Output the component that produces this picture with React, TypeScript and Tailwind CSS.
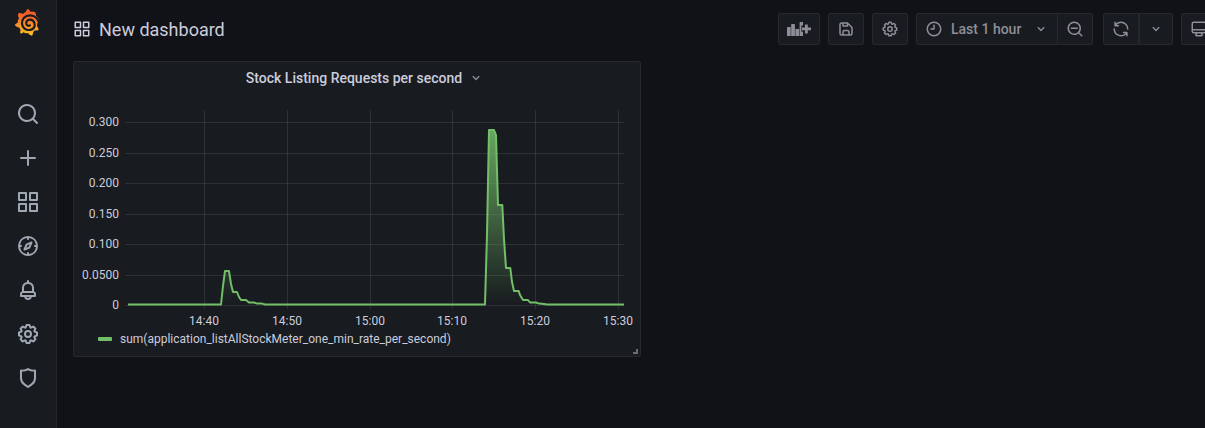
import type { ReactNode } from "react";

const icons = {
  apps: "M10,13H3a1,1,0,0,0-1,1v7a1,1,0,0,0,1,1h7a1,1,0,0,0,1-1V14A1,1,0,0,0,10,13ZM9,20H4V15H9ZM21,2H14a1,1,0,0,0-1,1v7a1,1,0,0,0,1,1h7a1,1,0,0,0,1-1V3A1,1,0,0,0,21,2ZM20,9H15V4h5Zm1,4H14a1,1,0,0,0-1,1v7a1,1,0,0,0,1,1h7a1,1,0,0,0,1-1V14A1,1,0,0,0,21,13Zm-1,7H15V15h5ZM10,2H3A1,1,0,0,0,2,3v7a1,1,0,0,0,1,1h7a1,1,0,0,0,1-1V3A1,1,0,0,0,10,2ZM9,9H4V4H9Z",
  search:
    "M21.71,20.29,18,16.61A9,9,0,1,0,16.61,18l3.68,3.68a1,1,0,0,0,1.42,0A1,1,0,0,0,21.71,20.29ZM11,18a7,7,0,1,1,7-7A7,7,0,0,1,11,18Z",
  plus: "M19,11H13V5a1,1,0,0,0-2,0v6H5a1,1,0,0,0,0,2h6v6a1,1,0,0,0,2,0V13h6a1,1,0,0,0,0-2Z",
  compass:
    "M12,2A10,10,0,1,0,22,12,10,10,0,0,0,12,2Zm1,17.93V19a1,1,0,0,0-2,0v.93A8,8,0,0,1,4.07,13H5a1,1,0,0,0,0-2H4.07A8,8,0,0,1,11,4.07V5a1,1,0,0,0,2,0V4.07A8,8,0,0,1,19.93,11H19a1,1,0,0,0,0,2h.93A8,8,0,0,1,13,19.93ZM15.14,7.55l-5,2.12a1,1,0,0,0-.52.52l-2.12,5a1,1,0,0,0,.21,1.1,1,1,0,0,0,.7.3.93.93,0,0,0,.4-.09l5-2.12a1,1,0,0,0,.52-.52l2.12-5a1,1,0,0,0-1.31-1.31Zm-2.49,5.1-2.28,1,1-2.28,2.28-1Z",
  bell: "M18,13.18V10a6,6,0,0,0-5-5.91V3a1,1,0,0,0-2,0V4.09A6,6,0,0,0,6,10v3.18A3,3,0,0,0,4,16v2a1,1,0,0,0,1,1H8.14a4,4,0,0,0,7.72,0H19a1,1,0,0,0,1-1V16A3,3,0,0,0,18,13.18ZM8,10a4,4,0,0,1,8,0v3H8Zm4,10a2,2,0,0,1-1.72-1h3.44A2,2,0,0,1,12,20Zm6-3H6V16a1,1,0,0,1,1-1H17a1,1,0,0,1,1,1Z",
  cog: "M21.32,9.55l-1.89-.63.89-1.78A1,1,0,0,0,20.13,6L18,3.87a1,1,0,0,0-1.15-.19l-1.78.89-.63-1.89A1,1,0,0,0,13.5,2h-3a1,1,0,0,0-.95.68L8.92,4.57,7.14,3.68A1,1,0,0,0,6,3.87L3.87,6a1,1,0,0,0-.19,1.15l.89,1.78-1.89.63A1,1,0,0,0,2,10.5v3a1,1,0,0,0,.68.95l1.89.63-.89,1.78A1,1,0,0,0,3.87,18L6,20.13a1,1,0,0,0,1.15.19l1.78-.89.63,1.89a1,1,0,0,0,.95.68h3a1,1,0,0,0,.95-.68l.63-1.89,1.78.89A1,1,0,0,0,18,20.13L20.13,18a1,1,0,0,0,.19-1.15l-.89-1.78,1.89-.63A1,1,0,0,0,22,13.5v-3A1,1,0,0,0,21.32,9.55ZM20,12.78l-1.2.4A2,2,0,0,0,17.64,16l.57,1.14-1.1,1.1L16,17.64a2,2,0,0,0-2.79,1.16l-.4,1.2H11.22l-.4-1.2A2,2,0,0,0,8,17.64l-1.14.57-1.1-1.1L6.36,16A2,2,0,0,0,5.2,13.18L4,12.78V11.22l1.2-.4A2,2,0,0,0,6.36,8L5.79,6.89l1.1-1.1L8,6.36A2,2,0,0,0,10.82,5.2l.4-1.2h1.56l.4,1.2A2,2,0,0,0,16,6.36l1.14-.57,1.1,1.1L17.64,8a2,2,0,0,0,1.16,2.79l1.2.4ZM12,8a4,4,0,1,0,4,4A4,4,0,0,0,12,8Zm0,6a2,2,0,1,1,2-2A2,2,0,0,1,12,14Z",
  shield:
    "M19.63,3.65a1,1,0,0,0-.84-.2,8,8,0,0,1-6.22-1.27,1,1,0,0,0-1.14,0A8,8,0,0,1,5.21,3.45a1,1,0,0,0-.84.2A1,1,0,0,0,4,4.43v7.45a9,9,0,0,0,3.77,7.33l3.65,2.6a1,1,0,0,0,1.16,0l3.65-2.6A9,9,0,0,0,20,11.88V4.43A1,1,0,0,0,19.63,3.65ZM18,11.88a7,7,0,0,1-2.93,5.7L12,19.77,8.93,17.58A7,7,0,0,1,6,11.88V5.58a10,10,0,0,0,6-1.39,10,10,0,0,0,6,1.39Z",
  save: "M20.71,9.29l-6-6a1,1,0,0,0-.32-.21A1.09,1.09,0,0,0,14,3H6A3,3,0,0,0,3,6V18a3,3,0,0,0,3,3H18a3,3,0,0,0,3-3V10A1,1,0,0,0,20.71,9.29ZM9,5h4V7H9Zm6,14H9V16a1,1,0,0,1,1-1h4a1,1,0,0,1,1,1Zm4-1a1,1,0,0,1-1,1H17V16a3,3,0,0,0-3-3H10a3,3,0,0,0-3,3v3H6a1,1,0,0,1-1-1V6A1,1,0,0,1,6,5H7V8A1,1,0,0,0,8,9h6a1,1,0,0,0,1-1V6.41l4,4Z",
  clock: "M12,2A10,10,0,1,0,22,12,10,10,0,0,0,12,2Zm0,18a8,8,0,1,1,8-8A8,8,0,0,1,12,20ZM12,6a1,1,0,0,0-1,1v4H8a1,1,0,0,0,0,2h4a1,1,0,0,0,1-1V7A1,1,0,0,0,12,6Z",
  down: "M17,9.17a1,1,0,0,0-1.41,0L12,12.71,8.46,9.17a1,1,0,0,0-1.41,0,1,1,0,0,0,0,1.42l4.24,4.24a1,1,0,0,0,1.42,0L17,10.59A1,1,0,0,0,17,9.17Z",
  zoomOut:
    "M21.71,20.29,18,16.61A9,9,0,1,0,16.61,18l3.68,3.68a1,1,0,0,0,1.42,0A1,1,0,0,0,21.71,20.29ZM11,18a7,7,0,1,1,7-7A7,7,0,0,1,11,18Zm4-8H7a1,1,0,0,0,0,2h8a1,1,0,0,0,0-2Z",
  sync: "M19.91,15.51H15.38a1,1,0,0,0,0,2h2.4A8,8,0,0,1,4,12a1,1,0,1,0-2,0,10,10,0,0,0,16.88,7.23V21a1,1,0,0,0,2,0V16.5A1,1,0,0,0,19.91,15.51ZM12,2A10,10,0,0,0,5.12,4.77V3a1,1,0,0,0-2,0V7.5a1,1,0,0,0,1,1h4.5a1,1,0,0,0,0-2H6.22A8,8,0,0,1,20,12a1,1,0,0,0,2,0A10,10,0,0,0,12,2Z",
  monitor:
    "M19,2H5A3,3,0,0,0,2,5V15a3,3,0,0,0,3,3H7.64l-.58,1a2,2,0,0,0,0,2,2,2,0,0,0,1.75,1h6.46A2,2,0,0,0,17,21a2,2,0,0,0,0-2l-.59-1H19a3,3,0,0,0,3-3V5A3,3,0,0,0,19,2ZM8.77,20,10,18H14l1.2,2ZM20,15a1,1,0,0,1-1,1H5a1,1,0,0,1-1-1V14H20Zm0-3H4V5A1,1,0,0,1,5,4H19a1,1,0,0,1,1,1Z",
};

function Icon({ name, className }: { name: keyof typeof icons; className: string }) {
  return (
    <svg viewBox="0 0 24 24" fill="currentColor" aria-hidden="true" className={`shrink-0 ${className}`}>
      <path d={icons[name]} />
    </svg>
  );
}

function Logo() {
  return (
    <svg viewBox="0 0 81 84" aria-hidden="true" className="h-7 w-[27px]">
      <defs>
        <linearGradient id="logo" x1="0" y1="1" x2="0" y2="0">
          <stop offset="0" stopColor="#fcc624" />
          <stop offset="0.3" stopColor="#f99b2a" />
          <stop offset="0.7" stopColor="#f26a2c" />
          <stop offset="1" stopColor="#ef5028" />
        </linearGradient>
      </defs>
      <path
        fill="url(#logo)"
        d="M42 2Q47 5 49 11Q57 9 64 13Q66 18 66 23Q76 31 76 43L70 46L69 54Q73 59 74 65Q68 69 62 67Q58 72 57 75Q57 80 54 83Q46 81 42 75Q34 77 29 73Q26 76 20 77Q17 71 20 65Q17 62 16 59Q7 58 2 51Q5 46 11 44Q11 36 15 31Q10 24 13 16Q20 14 27 18Q31 14 35 12Q36 6 42 2Z"
      />
      <path
        fill="none"
        stroke="#181b1f"
        strokeWidth="6.5"
        strokeLinecap="round"
        d="M77 51C74 32 62 22 48 22C33 22 23 33 24 47C25 60 36 67 47 66C58 65 63 57 62 49C61 39 54 35 47 35C40 35 36 41 37 47C38 52 43 55 48 52"
      />
    </svg>
  );
}

function AddPanelIcon() {
  return (
    <svg viewBox="0 0 24 14" fill="currentColor" aria-hidden="true" className="h-[14px] w-6 shrink-0">
      <rect x="0" y="5" width="3.7" height="9" rx="0.5" />
      <rect x="4.2" y="2" width="3.7" height="12" rx="0.5" />
      <rect x="8.4" y="7" width="3.7" height="7" rx="0.5" />
      <path d="M13.2 0h2.8v3.6h-1.6v6.2h1.6V14h-3.4V.6a.6.6 0 0 1 .6-.6Z" />
      <path d="M18 2.6h2.8v2.8H24v2.8h-3.2v3.2H18V8.2h-3V5.4h3Z" />
    </svg>
  );
}

const navItems: { name: keyof typeof icons; label: string }[] = [
  { name: "search", label: "Search" },
  { name: "plus", label: "Create" },
  { name: "apps", label: "Dashboards" },
  { name: "compass", label: "Explore" },
  { name: "bell", label: "Alerting" },
  { name: "cog", label: "Configuration" },
  { name: "shield", label: "Server Admin" },
];

function Sidebar() {
  return (
    <nav className="flex w-[57px] shrink-0 flex-col items-center border-r border-[#24262b] bg-[#181b1f]">
      <a href="#home" aria-label="Home" className="flex h-[92px] items-start pt-2 pr-px">
        <Logo />
      </a>
      <ul className="flex flex-col">
        {navItems.map((item) => (
          <li key={item.name}>
            <a
              href={`#${item.name}`}
              aria-label={item.label}
              className="flex h-11 w-14 items-center justify-center text-[#9fa7b3]"
            >
              <Icon name={item.name} className="size-6" />
            </a>
          </li>
        ))}
      </ul>
    </nav>
  );
}

function ToolButton({ label, className, children }: { label: string; className: string; children: ReactNode }) {
  return (
    <button
      type="button"
      aria-label={label}
      className={`flex h-8 shrink-0 items-center justify-center border border-[#26282d] bg-[#181b1f] ${className}`}
    >
      {children}
    </button>
  );
}

function Toolbar() {
  return (
    <div className="-mr-3 flex shrink-0 items-center gap-2 text-[#8e8e99]">
      <ToolButton label="Add panel" className="w-[42px] rounded-xs">
        <AddPanelIcon />
      </ToolButton>
      <ToolButton label="Save dashboard" className="w-9 rounded-xs">
        <Icon name="save" className="size-[18px]" />
      </ToolButton>
      <ToolButton label="Dashboard settings" className="w-9 rounded-xs">
        <Icon name="cog" className="size-[18px]" />
      </ToolButton>
      <div className="mr-0.5 flex">
        <button
          type="button"
          className="flex h-8 w-[142px] items-center rounded-l-xs border border-[#26282d] bg-[#181b1f] pl-2 text-sm font-medium"
        >
          <Icon name="clock" className="size-[18px]" />
          <span className="ml-2 flex-1 text-left whitespace-nowrap">Last 1 hour</span>
          <Icon name="down" className="mr-2 size-4" />
        </button>
        <ToolButton label="Zoom out time range" className="-ml-px w-9 rounded-r-xs">
          <Icon name="zoomOut" className="size-[18px]" />
        </ToolButton>
      </div>
      <div className="flex">
        <ToolButton label="Refresh dashboard" className="w-9 rounded-l-xs">
          <Icon name="sync" className="size-[18px]" />
        </ToolButton>
        <ToolButton label="Refresh interval" className="w-[34px] rounded-r-xs">
          <Icon name="down" className="size-4" />
        </ToolButton>
      </div>
      <ToolButton label="Cycle view mode" className="w-9 rounded-xs">
        <Icon name="monitor" className="size-[18px]" />
      </ToolButton>
    </div>
  );
}

const yTicks = [
  { y: 28, label: "0.300" },
  { y: 59, label: "0.250" },
  { y: 89, label: "0.200" },
  { y: 120, label: "0.150" },
  { y: 150, label: "0.100" },
  { y: 181, label: "0.0500" },
  { y: 211, label: "0" },
];

const xTicks = [
  { x: 130, label: "14:40" },
  { x: 213, label: "14:50" },
  { x: 296, label: "15:00" },
  { x: 378, label: "15:10" },
  { x: 461, label: "15:20" },
  { x: 544, label: "15:30" },
];

const series =
  "54,210.5 147,210.5 149,192 151,177 155,177 157,190 159,198 163,198 165,203 167,206 172,206 175,208.5 180,208.5 183,209.6 188,209.6 191,210.5 " +
  "411,210.5 413,140 415,36 420,36 422,41 424,111 428.3,111 430,145 432,174 436.3,174 438,188 440,197 444.7,197 446,201 449,206 454,206 456,208.5 462,208.5 465,209.6 470,210 473,210.5 550,210.5";

function Chart() {
  return (
    <svg
      viewBox="0 0 566 234"
      role="img"
      aria-label="Stock listing requests per second, 14:31 to 15:31"
      className="block w-full"
    >
      <defs>
        <linearGradient id="area" gradientUnits="userSpaceOnUse" x1="0" y1="16" x2="0" y2="211">
          <stop offset="0" stopColor="#73bf69" stopOpacity="0.95" />
          <stop offset="1" stopColor="#73bf69" stopOpacity="0" />
        </linearGradient>
      </defs>
      <g stroke="#f0faff" strokeOpacity="0.1">
        {yTicks.map((t) => (
          <path key={t.label} d={`M51 ${t.y + 0.5}H550`} />
        ))}
        {xTicks.map((t) => (
          <path key={t.label} d={`M${t.x + 0.5} 16V215`} />
        ))}
      </g>
      <polygon points={series} fill="url(#area)" />
      <polyline points={series} fill="none" stroke="#73bf69" strokeWidth="2" strokeLinejoin="round" />
      <g fill="#ccccdc" className="text-xs">
        {yTicks.map((t) => (
          <text key={t.label} x="45" y={t.y + 4} textAnchor="end">
            {t.label}
          </text>
        ))}
        {xTicks.map((t) => (
          <text key={t.label} x={t.x} y="231" textAnchor="middle">
            {t.label}
          </text>
        ))}
      </g>
    </svg>
  );
}

function Panel() {
  return (
    <section className="relative w-full max-w-[568px] rounded-xs border border-[#26282d] bg-[#181b1f] pb-1.5">
      <h2>
        <button type="button" className="flex h-8 w-full items-center justify-center gap-1.5 pl-4 text-sm font-medium">
          Stock Listing Requests per second
          <Icon name="down" className="size-4 text-[#8e8e99]" />
        </button>
      </h2>
      <Chart />
      <div className="flex h-[22px] items-center gap-2 pl-6 text-xs">
        <span className="h-1 w-3.5 rounded-[1px] bg-[#73bf69]" />
        <button type="button">sum(application_listAllStockMeter_one_min_rate_per_second)</button>
      </div>
      <span className="absolute right-0.5 bottom-0.5 size-[5px] border-r-2 border-b-2 border-[#6a6c70]" />
    </section>
  );
}

export default function App() {
  return (
    <div className="flex min-h-screen overflow-hidden bg-[#111217] font-['Roboto',sans-serif] text-[#ccccdc]">
      <Sidebar />
      <main className="min-w-0 flex-1 overflow-hidden pl-4">
        <header className="flex h-[61px] items-center justify-between pb-[3px]">
          <h1 className="flex items-center gap-2 text-lg">
            <Icon name="apps" className="size-[18px]" />
            <span className="pt-0.5">New dashboard</span>
          </h1>
          <Toolbar />
        </header>
        <Panel />
      </main>
    </div>
  );
}
